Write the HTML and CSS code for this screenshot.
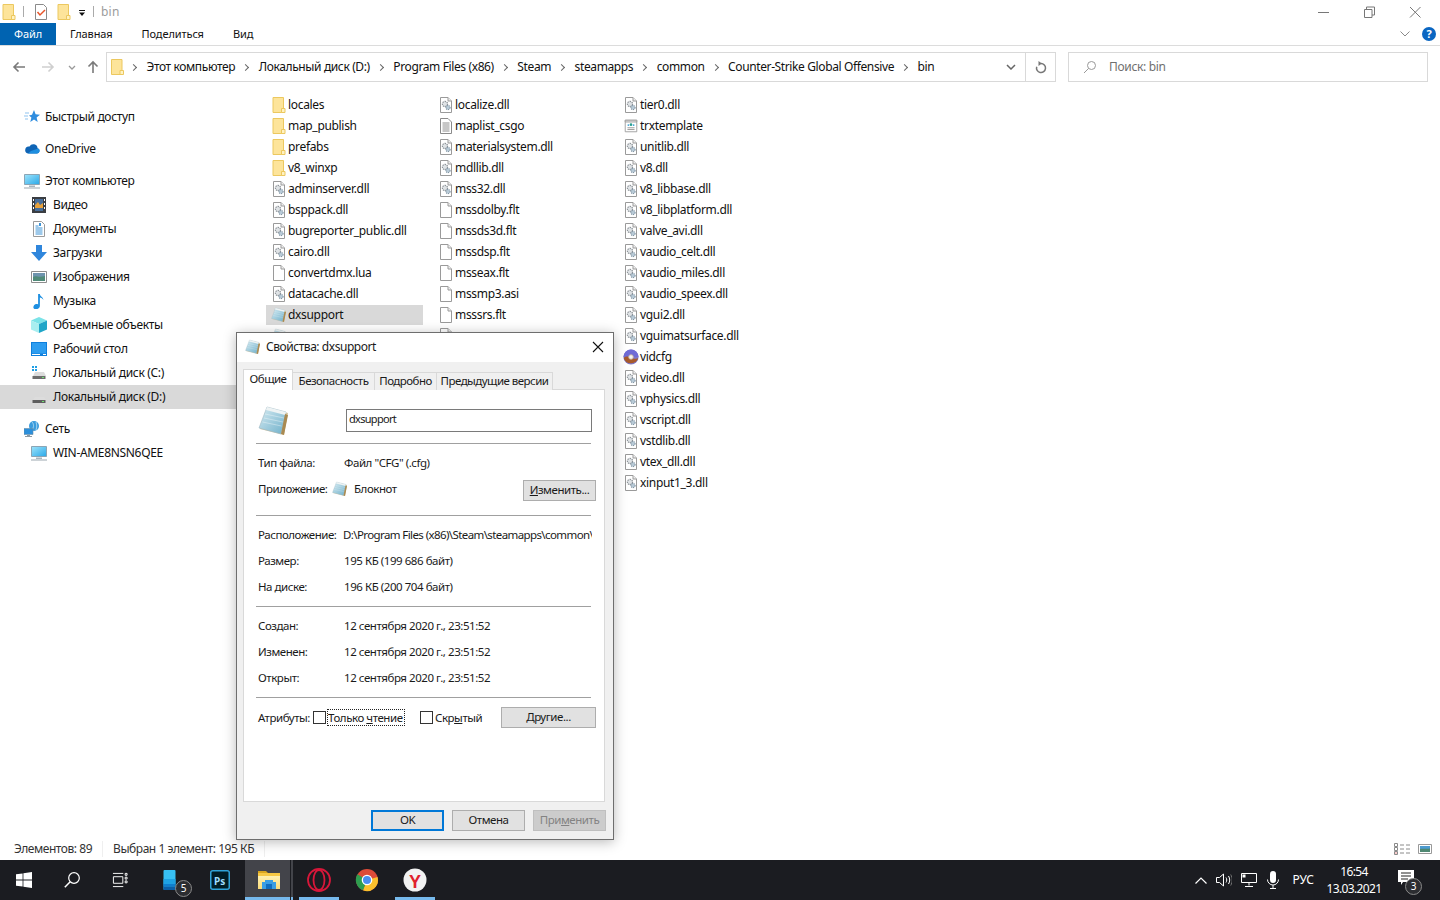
FILE: index.html
```html
<!DOCTYPE html>
<html lang="ru">
<head>
<meta charset="utf-8">
<title>bin</title>
<link rel="stylesheet" href="styles.css">
</head>
<body>
<svg class="defs" width="0" height="0" aria-hidden="true">
  <defs>
    <linearGradient id="padg" x1="0" y1="0" x2="1" y2="1"><stop offset="0" stop-color="#d6ebf2"/><stop offset="1" stop-color="#6fb0ca"/></linearGradient>
    <linearGradient id="monog" x1="0" y1="0" x2="1" y2="1"><stop offset="0" stop-color="#9fe4fb"/><stop offset="1" stop-color="#29a8e8"/></linearGradient>
    <linearGradient id="ffold" x1="0" y1="0" x2="0" y2="1"><stop offset="0" stop-color="#fff0b0"/><stop offset="1" stop-color="#fbdc7a"/></linearGradient>
    <symbol id="folder" viewBox="2 1 13 16"><path d="M2.500 1.500h10.500v15H2.500z" fill="#fde49a" stroke="#ecc85f"/><path d="M11 12.500h3.500v4H11z" fill="#fff2c2" stroke="#ecc85f"/></symbol>
    <symbol id="page" viewBox="2 1 12 16"><path d="M2.500 1.500h7.500l3.500 3.500v11.500h-11z" fill="#fff" stroke="#9a9a9a"/><path d="M10 1.500v3.500h3.500" fill="#f0f0f0" stroke="#9a9a9a"/></symbol>
    <symbol id="dll" viewBox="2 1 12 16"><path d="M2.500 1.500h7.500l3.500 3.500v11.500h-11z" fill="#fff" stroke="#9a9a9a"/><path d="M10 1.500v3.500h3.500" fill="#f0f0f0" stroke="#9a9a9a"/><circle cx="7" cy="8" r="2.600" fill="#dfe3e6" stroke="#8d9398" stroke-width="1.200" stroke-dasharray="1.500 .8"/><circle cx="10" cy="11.500" r="2.100" fill="#b9cbd8" stroke="#8396a5" stroke-width="1.100" stroke-dasharray="1.200 .7"/></symbol>
    <symbol id="txt" viewBox="2 1 12 16"><path d="M2.500 1.500h7.500l3.500 3.500v11.500h-11z" fill="#fff" stroke="#8a8a8a"/><path d="M4.500 6h7M4.500 8h7M4.500 10h7M4.500 12h7M4.500 14h7" stroke="#8f8f8f"/></symbol>
    <symbol id="cert" viewBox="0 0 16 18"><path d="M1.500 2.500h13v13h-13z" fill="#fff" stroke="#9a9a9a"/><path d="M1.500 2.500h13v2h-13z" fill="#e7e7e7" stroke="#9a9a9a"/><circle cx="5" cy="8" r="1" fill="#39a0d8"/><circle cx="8" cy="7.500" r="1.500" fill="#2a9f8f"/><circle cx="11" cy="8" r="1" fill="#39a0d8"/><path d="M4 11h8M4 13h8" stroke="#8f8f8f"/></symbol>
    <symbol id="disc" viewBox="0 0 18 18"><circle cx="9" cy="9" r="8.500" fill="#7f78c8"/><path d="M.5 9A8.500 8.500 0 0 1 17.500 9z" fill="#6f6bd6"/><path d="M.8 10C3 8 6 8 9 9.500S15 12 17.200 9.500A8.500 8.500 0 0 1 .8 10z" fill="#a85a2c"/><circle cx="9" cy="9" r="2.600" fill="#f3f3f3" stroke="#c9b39a"/></symbol>
    <symbol id="pad" viewBox="0 0 32 32"><path d="M2 24 10 3l20 5-4 22z" fill="#d8c7a0"/><path d="M1 23 9 2l19 5-5 22z" fill="url(#padg)" stroke="#9fb8c2" stroke-width=".6"/><path d="M9 2l19 5-1 3L8 5z" fill="#eef3f4"/><path d="M7 9l19 4M6 13l19 4M4.500 17l19 4" stroke="#fff" stroke-opacity=".45" stroke-width=".8"/><path d="M27 9l3 1-4 20-3-1z" fill="#a98a52"/></symbol>
    <symbol id="star" viewBox="0 0 16 16"><path d="M10 1l1.600 4.300L16 5.700l-3.400 2.900 1.100 4.400L10 10.600 6.300 13l1.100-4.400L5 6.500l3-.8z" fill="#2f8ddf"/><path d="M1 4h4M0 7h4M1 10h3" stroke="#8fc3ef"/></symbol>
    <symbol id="cloud" viewBox="0 0 16 12"><path d="M4 10.500H13a2.700 2.700 0 0 0 .6-5.300A4.300 4.300 0 0 0 5.500 3.600 3.500 3.500 0 0 0 4 10.500z" fill="#0f64b5"/><path d="M4 10.500h9a2.700 2.700 0 0 0 1.300-5L7 8z" fill="#1e8fe0"/></symbol>
    <symbol id="monitor" viewBox="0 0 16 16"><path d="M.5 1.500h15v10H.5z" fill="url(#monog)" stroke="#8ba5b5"/><path d="M5 12.500h6v1.500H5z" fill="#a9b5bd"/><path d="M0 14.500h16v1H0z" fill="#9aa7af"/></symbol>
    <symbol id="film" viewBox="0 0 14 16"><path d="M0 0h14v16H0z" fill="#3a3d42"/><path d="M3 2h8v12H3z" fill="#486e9a"/><path d="M3 8l3-3 2 3 3-2v5H3z" fill="#e8a13a"/><path d="M1 2h1v2H1zM1 6h1v2H1zM1 10h1v2H1zM12 2h1v2h-1zM12 6h1v2h-1zM12 10h1v2h-1z" fill="#fff"/></symbol>
    <symbol id="doc" viewBox="0 0 14 16"><path d="M1.500.5h8l3 3v12h-11z" fill="#fff" stroke="#9a9a9a"/><path d="M3.500 5h3M3.500 7h7M3.500 9h7M3.500 11h7M3.500 13h7" stroke="#3d93d5"/><path d="M7 2h2v3H7z" fill="#3d93d5"/></symbol>
    <symbol id="down" viewBox="0 0 16 16"><path d="M5 0h6v7h5l-8 9-8-9h5z" fill="#2f86dc"/></symbol>
    <symbol id="pic" viewBox="0 0 16 14"><path d="M.5 1.500h15v11H.5z" fill="#fff" stroke="#8d8d8d"/><path d="M2 3h12v4H2z" fill="#6d93ad"/><path d="M2 7c3-2 5 1 12-1v5H2z" fill="#4f8a78"/></symbol>
    <symbol id="note" viewBox="0 0 14 18"><path d="M6 1h2c.3 3 4 3.500 4 7-1-2-2.500-2.800-4-3v9.500c0 2-2 3.500-4.500 3.500S0 16.500 1 14.500 4.500 12 6 12.800z" fill="#1d8fe1"/></symbol>
    <symbol id="cube" viewBox="0 0 16 16"><path d="M8 0l8 3.500-8 3.500-8-3.500z" fill="#7be3e8"/><path d="M0 3.500 8 7v9l-8-3.500z" fill="#a9eef0"/><path d="M16 3.500 8 7v9l8-3.500z" fill="#1fa6c8"/></symbol>
    <symbol id="desk" viewBox="0 0 16 14"><path d="M0 0h16v14H0z" fill="#0f7fdc"/><path d="M1 1h14v10.500H1z" fill="#2d9df0"/><path d="M1 12h8v1H1zM12 12h3v1h-3z" fill="#fff"/></symbol>
    <symbol id="diskc" viewBox="0 0 16 16"><path d="M1 1h2v2H1zM4 1h2v2H4zM1 4h2v2H1zM4 4h2v2H4z" fill="#1e9fe6"/><path d="M2 11 4 7h9l2 4z" fill="#dcdcdc"/><path d="M1.500 11h13v3h-13z" fill="#6d6d6d"/><path d="M11 12h2v1h-2z" fill="#6fe06f"/></symbol>
    <symbol id="diskd" viewBox="0 0 16 16"><path d="M2 11 4 8h9l2 3z" fill="#dcdcdc"/><path d="M1.500 11h13v3h-13z" fill="#5e5e5e"/><path d="M11 12h2v1h-2z" fill="#6fe06f"/></symbol>
    <symbol id="net" viewBox="0 0 16 16"><circle cx="10" cy="5" r="5" fill="#3b9bdc"/><path d="M8 1c2 2 2 5 0 8M12 1c1 3 1 5 0 8" stroke="#bfe3f6" fill="none" stroke-width=".8"/><path d="M0 7.500h9v6H0z" fill="#2b8fdb" stroke="#6d8ea5" stroke-width=".6"/><path d="M3 14h3v1H3zM1 15h7v1H1z" fill="#8c9aa3"/></symbol>
  </defs>
</svg>

<div class="app">
  <header class="titlebar">
    <svg class="ic-title"><use href="#folder"/></svg>
    <span class="tsep"></span>
    <svg class="ic-check" viewBox="0 0 14 16"><path d="M1.500.5h8l3 3v12h-11z" fill="#fff" stroke="#8a8a8a"/><path d="M3.500 8l2.500 3 5-5" fill="none" stroke="#e8552a" stroke-width="1.500"/></svg>
    <svg class="ic-title2"><use href="#folder"/></svg>
    <svg class="ic-qat" viewBox="0 0 8 8"><path d="M1 1h6v1H1zM1 3.500h6L4 7z" fill="#111"/></svg>
    <span class="tsep tsep2"></span>
    <span class="wintitle">bin</span>
    <div class="winbtns">
      <svg class="wb" viewBox="0 0 46 22"><path d="M18 11.500h11" stroke="#777"/></svg>
      <svg class="wb" viewBox="0 0 46 22"><path d="M18.500 8.500h7.500v8h-7.500zM20.500 8.500v-2.500h8v8h-2.500" fill="none" stroke="#777"/></svg>
      <svg class="wb" viewBox="0 0 46 22"><path d="M18 6l10.500 10.500M28.500 6 18 16.500" stroke="#777"/></svg>
    </div>
  </header>

  <nav class="ribbon">
    <span class="rtab rtab-file">Файл</span>
    <span class="rtab">Главная</span>
    <span class="rtab">Поделиться</span>
    <span class="rtab">Вид</span>
    <svg class="rchev" viewBox="0 0 10 6"><path d="M.5.500 5 5 9.500.500" fill="none" stroke="#8a8a8a"/></svg>
    <span class="help">?</span>
  </nav>

  <div class="addr-row">
    <svg class="nav nav-back" viewBox="0 0 14 12"><path d="M13 6H2M6.500 1.500 2 6l4.500 4.500" fill="none" stroke="#7a7a7a" stroke-width="1.600"/></svg>
    <svg class="nav nav-fwd" viewBox="0 0 14 12"><path d="M1 6h11M7.500 1.500 12 6l-4.500 4.500" fill="none" stroke="#cfcfcf" stroke-width="1.600"/></svg>
    <svg class="nav nav-drop" viewBox="0 0 8 5"><path d="M1 1l3 3 3-3" fill="none" stroke="#999" stroke-width="1.300"/></svg>
    <svg class="nav nav-up" viewBox="0 0 12 14"><path d="M6 13V2M1.500 6.500 6 2l4.500 4.500" fill="none" stroke="#7a7a7a" stroke-width="1.600"/></svg>
    <div class="addr">
      <svg class="addr-folder"><use href="#folder"/></svg>
      <ol class="crumbs">
        <li>Этот компьютер</li>
        <li>Локальный диск (D:)</li>
        <li>Program Files (x86)</li>
        <li>Steam</li>
        <li>steamapps</li>
        <li>common</li>
        <li>Counter-Strike Global Offensive</li>
        <li>bin</li>
      </ol>
      <svg class="addr-chev" viewBox="0 0 10 6"><path d="M1 1l4 4 4-4" fill="none" stroke="#666" stroke-width="1.500"/></svg>
      <span class="addr-refresh">
        <svg class="refresh" viewBox="0 0 12 13"><path d="M6 2.500a4.500 4.500 0 1 1-4.300 3.200" fill="none" stroke="#777" stroke-width="1.500"/><path d="M3.500 0 7 2.500 3.500 5z" fill="#777"/></svg>
      </span>
    </div>
    <div class="search">
      <svg class="search-ic" viewBox="0 0 14 14"><circle cx="8.500" cy="5.500" r="4" fill="none" stroke="#999"/><path d="M5.500 8.500 1 13" stroke="#999"/></svg>
      <span>Поиск: bin</span>
    </div>
  </div>

  <main class="main">
    <aside class="side">
      <div class="sgroup"><div class="sitem top"><svg class="ic16"><use href="#star"/></svg>Быстрый доступ</div></div>
      <div class="sgroup"><div class="sitem top"><svg class="ic16"><use href="#cloud"/></svg>OneDrive</div></div>
      <div class="sgroup">
        <div class="sitem top"><svg class="ic16"><use href="#monitor"/></svg>Этот компьютер</div>
        <div class="sitem"><svg class="ic16"><use href="#film"/></svg>Видео</div>
        <div class="sitem"><svg class="ic16"><use href="#doc"/></svg>Документы</div>
        <div class="sitem"><svg class="ic16"><use href="#down"/></svg>Загрузки</div>
        <div class="sitem"><svg class="ic16"><use href="#pic"/></svg>Изображения</div>
        <div class="sitem"><svg class="ic16"><use href="#note"/></svg>Музыка</div>
        <div class="sitem"><svg class="ic16"><use href="#cube"/></svg>Объемные объекты</div>
        <div class="sitem"><svg class="ic16"><use href="#desk"/></svg>Рабочий стол</div>
        <div class="sitem"><svg class="ic16"><use href="#diskc"/></svg>Локальный диск (C:)</div>
        <div class="sitem on"><svg class="ic16"><use href="#diskd"/></svg>Локальный диск (D:)</div>
      </div>
      <div class="sgroup">
        <div class="sitem top"><svg class="ic16"><use href="#net"/></svg>Сеть</div>
        <div class="sitem"><svg class="ic16"><use href="#monitor"/></svg>WIN-AME8NSN6QEE</div>
      </div>
    </aside>

    <section class="files">
      <div class="file"><svg><use href="#folder"/></svg>locales</div>
      <div class="file"><svg><use href="#folder"/></svg>map_publish</div>
      <div class="file"><svg><use href="#folder"/></svg>prefabs</div>
      <div class="file"><svg><use href="#folder"/></svg>v8_winxp</div>
      <div class="file"><svg><use href="#dll"/></svg>adminserver.dll</div>
      <div class="file"><svg><use href="#dll"/></svg>bsppack.dll</div>
      <div class="file"><svg><use href="#dll"/></svg>bugreporter_public.dll</div>
      <div class="file"><svg><use href="#dll"/></svg>cairo.dll</div>
      <div class="file"><svg><use href="#page"/></svg>convertdmx.lua</div>
      <div class="file"><svg><use href="#dll"/></svg>datacache.dll</div>
      <div class="file sel"><svg class="wide"><use href="#pad"/></svg>dxsupport</div>
      <div class="file peek"><svg class="wide"><use href="#pad"/></svg></div>
      <div class="file col-break"><svg><use href="#dll"/></svg>localize.dll</div>
      <div class="file"><svg><use href="#txt"/></svg>maplist_csgo</div>
      <div class="file"><svg><use href="#dll"/></svg>materialsystem.dll</div>
      <div class="file"><svg><use href="#dll"/></svg>mdllib.dll</div>
      <div class="file"><svg><use href="#dll"/></svg>mss32.dll</div>
      <div class="file"><svg><use href="#page"/></svg>mssdolby.flt</div>
      <div class="file"><svg><use href="#page"/></svg>mssds3d.flt</div>
      <div class="file"><svg><use href="#page"/></svg>mssdsp.flt</div>
      <div class="file"><svg><use href="#page"/></svg>msseax.flt</div>
      <div class="file"><svg><use href="#page"/></svg>mssmp3.asi</div>
      <div class="file"><svg><use href="#page"/></svg>msssrs.flt</div>
      <div class="file peek"><svg><use href="#page"/></svg></div>
      <div class="file col-break"><svg><use href="#dll"/></svg>tier0.dll</div>
      <div class="file"><svg class="wide"><use href="#cert"/></svg>trxtemplate</div>
      <div class="file"><svg><use href="#dll"/></svg>unitlib.dll</div>
      <div class="file"><svg><use href="#dll"/></svg>v8.dll</div>
      <div class="file"><svg><use href="#dll"/></svg>v8_libbase.dll</div>
      <div class="file"><svg><use href="#dll"/></svg>v8_libplatform.dll</div>
      <div class="file"><svg><use href="#dll"/></svg>valve_avi.dll</div>
      <div class="file"><svg><use href="#dll"/></svg>vaudio_celt.dll</div>
      <div class="file"><svg><use href="#dll"/></svg>vaudio_miles.dll</div>
      <div class="file"><svg><use href="#dll"/></svg>vaudio_speex.dll</div>
      <div class="file"><svg><use href="#dll"/></svg>vgui2.dll</div>
      <div class="file"><svg><use href="#dll"/></svg>vguimatsurface.dll</div>
      <div class="file"><svg class="wide"><use href="#disc"/></svg>vidcfg</div>
      <div class="file"><svg><use href="#dll"/></svg>video.dll</div>
      <div class="file"><svg><use href="#dll"/></svg>vphysics.dll</div>
      <div class="file"><svg><use href="#dll"/></svg>vscript.dll</div>
      <div class="file"><svg><use href="#dll"/></svg>vstdlib.dll</div>
      <div class="file"><svg><use href="#dll"/></svg>vtex_dll.dll</div>
      <div class="file"><svg><use href="#dll"/></svg>xinput1_3.dll</div>
    </section>
  </main>

  <footer class="status">
    <span class="st st1">Элементов: 89</span>
    <span class="st st2">Выбран 1 элемент: 195 КБ</span>
    <div class="views">
      <svg class="view1" viewBox="0 0 17 12"><path d="M.5.500h3v3h-3zM.5 4.500h3v3h-3zM.5 8.500h3v3h-3z" fill="#fff" stroke="#8a8a8a"/><path d="M6 2h4M12 2h4M6 6h4M12 6h4M6 10h4M12 10h4" stroke="#8a8a8a"/><path d="M1.500 9.500h1v1h-1z" fill="#d33"/></svg>
      <svg class="view2" viewBox="0 0 14 10"><path d="M.5.500h13v9H.5z" fill="#fff" stroke="#999"/><path d="M2 2h10v3H2z" fill="#4d9bd0"/><path d="M2 5c3-1 6 .5 10-.5V8H2z" fill="#4f8872"/></svg>
    </div>
  </footer>

  <div class="taskbar">
    <div class="tb-left">
      <span class="tb"><svg class="tbi" viewBox="0 0 16 16"><path d="M0 2.300 6.600 1.400v6.200H0zM7.400 1.300 16 0v7.600H7.400zM0 8.400h6.600v6.200L0 13.700zM7.400 8.400H16V16l-8.600-1.300z" fill="#fff"/></svg></span>
      <span class="tb"><svg class="tbi" viewBox="0 0 16 16"><circle cx="10" cy="6" r="5.300" fill="none" stroke="#fff" stroke-width="1.200"/><path d="M6.200 9.800.8 15.200" stroke="#fff" stroke-width="1.500"/></svg></span>
      <span class="tb"><svg class="tbi" viewBox="0 0 17 16"><path d="M1.500 4.500h10v7h-10zM1 1h11M1 15h11M14 1h2v2h-2zM14 5h2v2h-2zM14 9h2v2h-2z" fill="none" stroke="#fff"/></svg></span>
      <span class="tb tb-phone">
        <svg class="tbphone" viewBox="0 0 12 20"><path d="M1 0h10a1 1 0 0 1 1 1v18a1 1 0 0 1-1 1H1a1 1 0 0 1-1-1V1a1 1 0 0 1 1-1z" fill="#37c0f4"/><path d="M0 9h12v5H0z" fill="#1ea2e4"/><path d="M0 14h12v2.500H0z" fill="#0f7fcf"/><path d="M0 16.500h12V19a1 1 0 0 1-1 1H1a1 1 0 0 1-1-1z" fill="#0a5fa8"/></svg>
        <span class="tb-badge">5</span>
      </span>
      <span class="tb tb-ps"><svg class="tbi20" viewBox="0 0 20 20"><rect x=".75" y=".75" width="18.500" height="18.500" rx="2" fill="#001d26" stroke="#2fa3d9" stroke-width="1.500"/><text class="pstext" x="4" y="14.500">Ps</text></svg></span>
      <span class="tb tb-exp"><svg class="tbi22" viewBox="0 0 22 18"><path d="M0 0h8l2 2h-10z" fill="#d9a51e"/><path d="M0 2h22v16H0z" fill="#f7c843"/><path d="M0 5h22v13H0z" fill="url(#ffold)"/><path d="M7 9h8v2h3v7H4v-7h3z" fill="#3a9de4"/><path d="M8 13h6v5H8z" fill="#0f6cc0"/></svg></span>
      <span class="tb tb-op"><svg class="tbi24" viewBox="0 0 24 24"><circle cx="12" cy="12" r="11" fill="none" stroke="#d8173a" stroke-width="1.800"/><ellipse cx="12" cy="12" rx="5.500" ry="10" fill="none" stroke="#d8173a" stroke-width="1.800"/></svg></span>
      <span class="tb"><svg class="tbi24" viewBox="0 0 24 24"><circle cx="12" cy="12" r="11" fill="#dd4b39"/><path d="M12 12 22.500 9A11 11 0 0 1 8 22.300z" fill="#fbc02d"/><path d="M12 12 8 22.300A11 11 0 0 1 2.400 6.300z" fill="#2e9e4f"/><circle cx="12" cy="12" r="5.300" fill="#fff"/><circle cx="12" cy="12" r="4" fill="#4a8df0"/></svg></span>
      <span class="tb tb-ya"><svg class="tbi24" viewBox="0 0 24 24"><circle cx="12" cy="12" r="11.500" fill="#f2f2f2"/><text class="yatext" x="12" y="19.500">Y</text></svg></span>
    </div>
    <div class="tray">
      <svg class="tr tr-up" viewBox="0 0 12 7"><path d="M.5 6.500 6 1l5.500 5.500" fill="none" stroke="#fff" stroke-width="1.200"/></svg>
      <svg class="tr tr-spk" viewBox="0 0 16 14"><path d="M.5 4.500h3l4-3.500v12l-4-3.500h-3z" fill="none" stroke="#fff"/><path d="M10 4.500c1 1.500 1 3.500 0 5M12.500 3c1.600 2.500 1.600 5.500 0 8" fill="none" stroke="#fff"/><path d="M14.700 1.500c2 3.500 2 7.500 0 11" fill="none" stroke="#777"/></svg>
      <svg class="tr tr-net" viewBox="0 0 16 14"><path d="M.5.500h15v9H.5zM8 9.500v3M4 13.500h8" fill="none" stroke="#fff"/><path d="M1.500 1.500h3v3h-3z" fill="#fff"/></svg>
      <svg class="tr tr-mic" viewBox="0 0 12 18"><rect x="3" y="0" width="6" height="12" rx="3" fill="#fff"/><path d="M.5 8.500a5.500 5.500 0 0 0 11 0M6 14v3M3 17.500h6" fill="none" stroke="#fff"/></svg>
      <span class="lang">РУС</span>
      <div class="clock"><span>16:54</span><span>13.03.2021</span></div>
      <span class="notif">
        <svg class="notif-ic" viewBox="0 0 16 15"><path d="M0 0h16v12H5l-2 3v-3H0z" fill="#fff"/><path d="M3 3h10M3 6h10M3 9h7" stroke="#222"/></svg>
        <span class="tb-badge notif-badge">3</span>
      </span>
    </div>
  </div>

  <div class="dialog">
    <div class="dlg-title">
      <svg class="ic16 dlg-icon"><use href="#pad"/></svg>
      <span>Свойства: dxsupport</span>
      <svg class="dlg-x" viewBox="0 0 12 12"><path d="M1 1l10 10M11 1 1 11" stroke="#111" stroke-width="1.100"/></svg>
    </div>
    <div class="dlg-body">
      <div class="tabs">
        <span class="tab tab-on">Общие</span>
        <span class="tab">Безопасность</span>
        <span class="tab">Подробно</span>
        <span class="tab">Предыдущие версии</span>
      </div>
      <div class="panel">
        <div class="head">
          <svg class="bigicon"><use href="#pad"/></svg>
          <div class="namebox">dxsupport</div>
        </div>
        <div class="sep sep-a"></div>
        <div class="row"><span class="lbl">Тип файла:</span><span>Файл "CFG" (.cfg)</span></div>
        <div class="row"><span class="lbl lbl-app">Приложение:</span><svg class="ic16 app-ic"><use href="#pad"/></svg><span>Блокнот</span><span class="btn btn-change"><u>И</u>зменить...</span></div>
        <div class="sep sep-b"></div>
        <div class="row"><span class="lbl">Расположение:</span><span class="clip">D:\Program Files (x86)\Steam\steamapps\common\Counter-Strike Global Offensive\bin</span></div>
        <div class="row"><span class="lbl">Размер:</span><span>195 КБ (199 686 байт)</span></div>
        <div class="row"><span class="lbl">На диске:</span><span>196 КБ (200 704 байт)</span></div>
        <div class="sep sep-c"></div>
        <div class="row"><span class="lbl">Создан:</span><span>12 сентября 2020 г., 23:51:52</span></div>
        <div class="row"><span class="lbl">Изменен:</span><span>12 сентября 2020 г., 23:51:52</span></div>
        <div class="row"><span class="lbl">Открыт:</span><span>12 сентября 2020 г., 23:51:52</span></div>
        <div class="sep sep-d"></div>
        <div class="attr">
          <span class="attr-lbl">Атрибуты:</span>
          <span class="cb"></span>
          <span class="focus">Только <u>ч</u>тение</span>
          <span class="cb cb2"></span>
          <span class="hid">Скр<u>ы</u>тый</span>
          <span class="btn btn-other"><u>Д</u>ругие...</span>
        </div>
      </div>
      <div class="actions">
        <span class="btn btn-act btn-ok">OK</span>
        <span class="btn btn-act">Отмена</span>
        <span class="btn btn-act btn-off">При<u>м</u>енить</span>
      </div>
    </div>
  </div>
</div>
</body>
</html>
```

FILE: styles.css
```css
* { box-sizing: border-box; }
html, body { margin: 0; padding: 0; height: 100%; overflow: hidden; }
body { font: 12px/16px "Noto Sans", "Open Sans", sans-serif; color: #111; background: #fff; letter-spacing: -0.32px; }
.defs { position: absolute; }
svg { display: block; flex: none; }
.app { position: relative; width: 1440px; height: 900px; display: flex; flex-direction: column; }
.ic16 { width: 16px; height: 16px; }

/* title bar */
.titlebar { height: 23px; display: flex; align-items: center; flex: none; }
.ic-title { width: 14px; height: 16px; margin-left: 2px; }
.ic-title2 { width: 14px; height: 16px; margin-left: 9px; }
.tsep { width: 1px; height: 11px; background: #aaa; margin-left: 7px; }
.ic-check { width: 14px; height: 16px; margin-left: 10px; }
.ic-qat { width: 8px; height: 8px; margin-left: 7px; margin-top: 3px; }
.tsep2 { margin-left: 7px; }
.wintitle { margin-left: 7px; color: #9c9c9c; font-size: 12px; letter-spacing: .2px; }
.winbtns { margin-left: auto; margin-right: 2px; display: flex; }
.wb { width: 46px; height: 22px; }

/* ribbon */
.ribbon { height: 23px; display: flex; align-items: center; flex: none; border-bottom: 1px solid #dcdcdc; }
.rtab { height: 22px; line-height: 22px; padding: 0 14px; margin-right: 1px; font-size: 11px; letter-spacing: -0.1px; }
.rtab-file { width: 56px; background: #0063b1; color: #fff; text-align: center; padding: 0; margin-right: 0; }
.rchev { width: 10px; height: 6px; margin-left: auto; margin-right: 12px; }
.help { width: 14px; height: 14px; margin-right: 4px; border-radius: 50%; background: #0a66c2; color: #fff; font: bold 11px/14px "Noto Sans", sans-serif; text-align: center; }

/* address row */
.addr-row { height: 42px; display: flex; align-items: center; flex: none; }
.nav { flex: none; }
.nav-back { width: 14px; height: 12px; margin-left: 12px; }
.nav-fwd { width: 14px; height: 12px; margin-left: 15px; }
.nav-drop { width: 8px; height: 5px; margin-left: 13px; }
.nav-up { width: 12px; height: 14px; margin-left: 11px; }
.addr { width: 950px; height: 30px; margin-left: 7px; border: 1px solid #d9d9d9; display: flex; align-items: center; }
.addr-folder { margin-left: 4px; width: 13px; height: 16px; }
.crumbs { list-style: none; margin: 0 0 0 -1px; padding: 0; display: flex; align-items: center; letter-spacing: -0.38px; }
.crumbs li { display: flex; align-items: center; white-space: nowrap; }
.crumbs li::before { content: ""; width: 4px; height: 4px; border-top: 1px solid #666; border-right: 1px solid #666; transform: rotate(45deg); margin: 0 10.5px 0 8px; }
.addr-chev { width: 10px; height: 6px; margin-left: auto; margin-right: 9px; }
.addr-refresh { width: 30px; height: 28px; border-left: 1px solid #d9d9d9; display: flex; align-items: center; justify-content: center; }
.refresh { width: 12px; height: 13px; }
.search { width: 360px; height: 30px; margin-left: 12px; border: 1px solid #d9d9d9; display: flex; align-items: center; color: #6f6f6f; }
.search-ic { width: 14px; height: 14px; margin: 0 12px 0 14px; }

/* main */
.main { flex: 1; display: flex; min-height: 0; padding-top: 7px; }
.side { width: 250px; flex: none; padding-top: 10px; display: flex; flex-direction: column; gap: 8px; }
.sitem { height: 24px; display: flex; align-items: center; gap: 6px; padding-left: 31px; white-space: nowrap; }
.sitem.top { padding-left: 24px; gap: 5px; }
.sitem.on { background: #d9d9d9; }
.files { flex: 1; padding: 0 0 0 16px; display: grid; grid-auto-flow: column; grid-template-rows: repeat(19, 21px); grid-template-columns: 167px 185px 200px; justify-content: start; align-content: start; }
.file { height: 20px; display: flex; align-items: center; padding-left: 6px; white-space: nowrap; width: 157px; }
.file svg { width: 14px; height: 16px; margin-right: 2px; }
.file svg.wide { width: 16px; height: 16px; margin-left: -1px; margin-right: 1px; }
.file.col-break { grid-row-start: 1; }
.file.sel { background: #d9d9d9; }
.file.peek { height: 6px; overflow: hidden; align-items: flex-start; padding-top: 2px; }

/* status bar */
.status { height: 22px; flex: none; display: flex; align-items: center; color: #333; letter-spacing: -0.45px; }
.st { padding-right: 10px; border-right: 1px solid #efefef; }
.st1 { margin-left: 14px; }
.st2 { margin-left: 10px; }
.views { margin-left: auto; display: flex; gap: 7px; margin-right: 8px; align-items: center; }
.view1 { width: 17px; height: 12px; }
.view2 { width: 14px; height: 10px; }

/* taskbar */
.taskbar { height: 40px; flex: none; background: #1b1c21; display: flex; justify-content: space-between; color: #fff; }
.tb-left { display: flex; }
.tb { position: relative; width: 48px; height: 40px; display: flex; align-items: center; justify-content: center; }
.tbi { width: 16px; height: 16px; }
.tbi20 { width: 20px; height: 20px; }
.tbi22 { width: 22px; height: 18px; }
.tbi24 { width: 24px; height: 24px; }
.tb-phone { justify-content: flex-start; padding-left: 19px; }
.tbphone { width: 13px; height: 20px; }
.tb-badge { position: absolute; left: 31px; top: 20px; width: 17px; height: 17px; border-radius: 50%; background: #2c2d31; border: 1px solid #8a8a8a; color: #fff; font-size: 10px; line-height: 15px; text-align: center; letter-spacing: 0; }
.tb-ps { margin-left: 4px; }
.pstext { font: bold 10px "Noto Sans", sans-serif; fill: #9fdcff; letter-spacing: 0; }
.yatext { font: bold 18px "Liberation Sans", sans-serif; fill: #e0202c; text-anchor: middle; letter-spacing: 0; }
.tb-exp { background: #43444a; margin-left: 1px; border-bottom: 3px solid #76b9ed; }
.tb-exp::after { content: ""; position: absolute; left: 45px; top: 0; bottom: -3px; width: 1px; background: #1b1c21; }
.tb-exp .tbi22 { margin-top: 3px; }
.tb-op { margin-left: 2px; }
.tb-op::after, .tb-ya::after { content: ""; position: absolute; left: 4px; right: 4px; bottom: 0; height: 3px; background: #76b9ed; }
.tray { display: flex; align-items: center; }
.tr-up { width: 12px; height: 7px; margin-right: 9px; }
.tr-spk { width: 16px; height: 14px; margin-right: 9px; }
.tr-net { width: 16px; height: 14px; margin-right: 10px; }
.tr-mic { width: 12px; height: 18px; margin-right: 13px; }
.lang { margin-right: 13px; letter-spacing: 0; }
.clock { display: flex; flex-direction: column; align-items: center; width: 54px; line-height: 17px; letter-spacing: -0.65px; }
.notif { position: relative; width: 48px; height: 40px; margin-left: 6px; margin-right: 5px; display: flex; align-items: center; padding-left: 11px; }
.notif-ic { width: 16px; height: 15px; margin-top: -5px; }
.notif-badge { left: 18px; top: 18px; }

/* dialog */
.dialog { position: absolute; left: 236px; top: 332px; width: 378px; height: 508px; background: #f0f0f0; border: 1px solid #6e6e6e; box-shadow: 0 2px 12px rgba(0,0,0,.28); display: flex; flex-direction: column; font-size: 11.5px; letter-spacing: -0.45px; color: #1a1a1a; }
.dlg-title { height: 29px; flex: none; background: #fff; display: flex; align-items: center; padding: 0 0 2px 8px; font-size: 12px; letter-spacing: -0.45px; }
.dlg-icon { margin-right: 5px; }
.dlg-x { width: 12px; height: 12px; margin-left: auto; margin-right: 9px; }
.dlg-body { flex: 1; padding: 7px 8px 0 6px; display: flex; flex-direction: column; }
.tabs { display: flex; align-items: flex-end; height: 21px; position: relative; z-index: 1; }
.tab { height: 18px; line-height: 15px; border: 1px solid #d9d9d9; border-left: 0; border-bottom: 0; text-align: center; white-space: nowrap; background: #f0f0f0; width: 62px; letter-spacing: -0.52px; }
.tab:nth-child(2) { width: 82px; }
.tab:nth-child(4) { width: 116px; }
.tab-on { height: 21px; width: 50px; background: #fff; border-left: 1px solid #d9d9d9; line-height: 18px; }
.panel { height: 413px; margin-top: -1px; background: #fff; border: 1px solid #d9d9d9; padding: 0 8px 0 14px; display: flex; flex-direction: column; }
.head { height: 53px; flex: none; display: flex; align-items: flex-start; padding-top: 15px; }
.bigicon { width: 32px; height: 32px; }
.namebox { width: 246px; height: 23px; margin: 4px 0 0 56px; border: 1px solid #7a7a7a; padding-left: 2px; line-height: 18px; font-size: 11px; letter-spacing: -0.7px; }
.sep { flex: none; height: 1px; background: #a0a0a0; margin-left: -2px; margin-right: 5px; }
.sep-a { margin-bottom: 6px; }
.sep-b { margin-top: 13px; margin-bottom: 6px; }
.sep-c { margin-top: 6px; margin-bottom: 6px; }
.sep-d { margin-top: 6px; margin-bottom: 9px; }
.row { height: 26px; flex: none; display: flex; align-items: center; white-space: nowrap; }
.lbl { width: 86px; flex: none; }
.lbl-app { width: 74px; }
.app-ic { margin-right: 6px; }
.clip { width: 249px; overflow: hidden; flex: none; margin-left: -1px; letter-spacing: -0.6px; }
.btn { display: inline-flex; align-items: center; justify-content: center; height: 21px; padding-bottom: 1px; background: #e1e1e1; border: 1px solid #adadad; white-space: nowrap; }
.btn-change { width: 73px; margin-left: auto; margin-top: 3px; }
.attr { display: flex; align-items: center; height: 21px; flex: none; white-space: nowrap; }
.attr-lbl { width: 55px; }
.cb { width: 13px; height: 13px; border: 1px solid #333; background: #fff; flex: none; }
.cb2 { margin-left: 16px; }
.focus { width: 76px; height: 15px; margin-left: 2px; outline: 1px dotted #222; line-height: 15px; }
.hid { margin-left: 2px; width: 66px; }
.btn-other { width: 95px; }
.actions { display: flex; justify-content: flex-end; gap: 8px; margin-top: 8px; margin-right: -1px; }
.btn-act { width: 73px; }
.btn-ok { border: 2px solid #0078d7; }
.btn-off { background: #ccc; border-color: #bfbfbf; color: #838383; }
```
